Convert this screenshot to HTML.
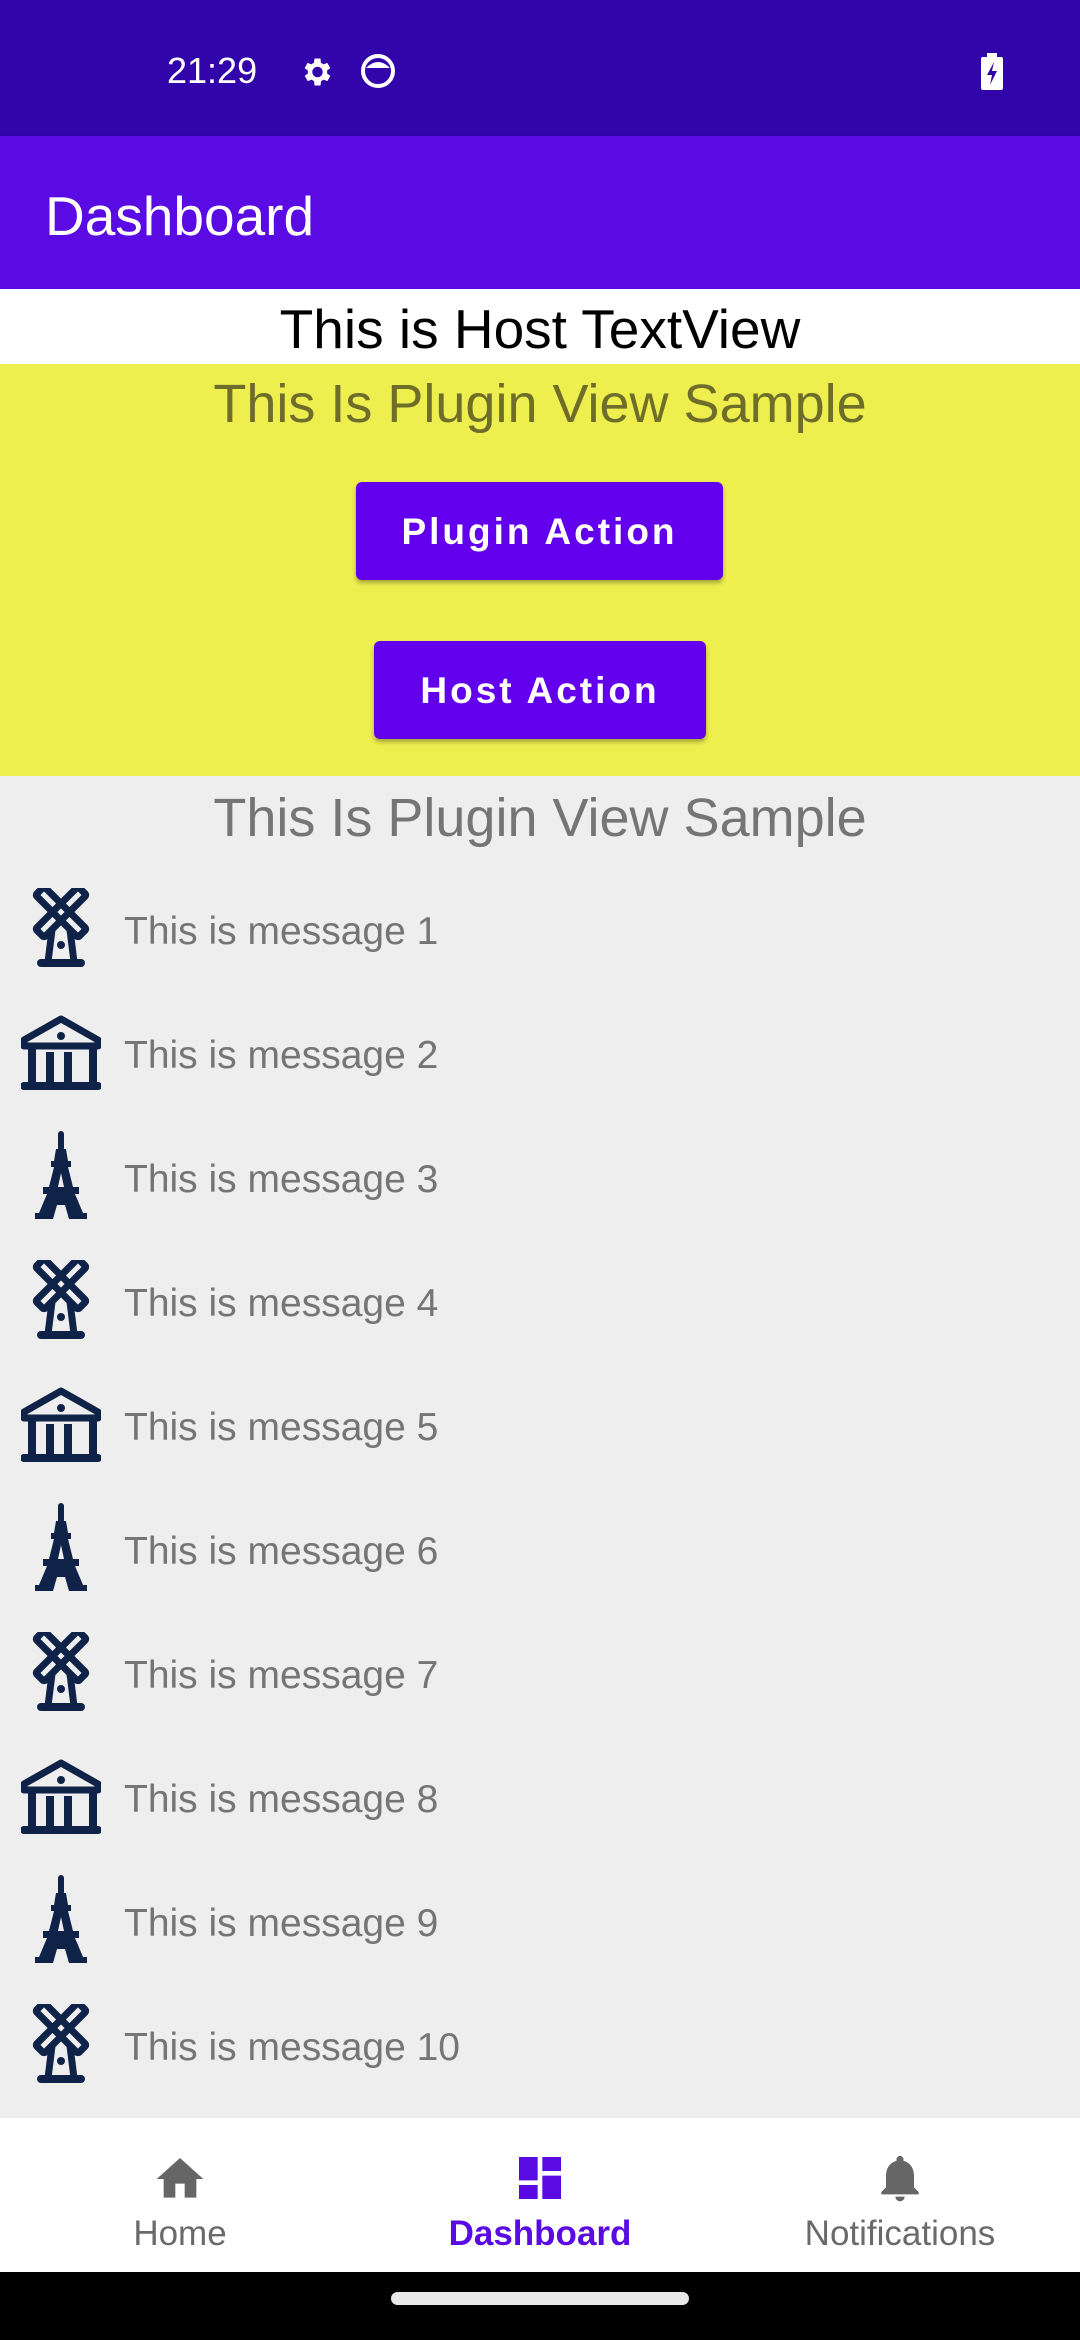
<!DOCTYPE html>
<html><head><meta charset="utf-8"><style>
*{margin:0;padding:0;box-sizing:border-box}
body{width:1080px;height:2340px;overflow:hidden;font-family:"Liberation Sans",Roboto,sans-serif;background:#eeeeee;position:relative}
.abs{position:absolute}
.status{left:0;top:0;width:1080px;height:136px;background:#3205ab}
.appbar{left:0;top:136px;width:1080px;height:153px;background:#5a0be4;box-shadow:0 3px 5px rgba(0,0,0,.2)}
.host{left:0;top:289px;width:1080px;height:75px;background:#fff;text-align:center;font-size:55px;line-height:80px;color:#000}
.yellow{left:0;top:364px;width:1080px;height:412px;background:#eeee4f}
.btn{background:#6200ee;color:#fff;font-size:37px;font-weight:bold;letter-spacing:3px;text-align:center;border-radius:6px;box-shadow:0 3px 4px rgba(0,0,0,.3)}
.title{width:1080px;text-align:center;font-size:54px}
.row{left:0;width:1080px;height:124px}
.row svg{position:absolute;left:21px;top:22px}
.row span{position:absolute;left:124px;top:4px;line-height:124px;font-size:39px;color:#757575}
.nav{left:0;top:2118px;width:1080px;height:154px;background:#fff}
.lbl{position:absolute;top:2214px;font-size:35px;text-align:center;width:360px}
</style></head><body>
<div class="abs status">
 <div class="abs" style="left:167px;top:50px;font-size:36px;color:#fff;font-weight:500">21:29</div>
 <svg class="abs" style="left:298px;top:54px" width="36" height="36" viewBox="0 0 24 24"><path fill="#fff" d="M19.4 13a7.5 7.5 0 0 0 0-2l2.1-1.6-2-3.5-2.5 1a7.3 7.3 0 0 0-1.7-1L15 3h-4l-.4 2.9a7.3 7.3 0 0 0-1.7 1l-2.5-1-2 3.5L6.6 11a7.5 7.5 0 0 0 0 2l-2.1 1.6 2 3.5 2.5-1c.5.4 1.1.7 1.7 1L11 21h4l.4-2.9c.6-.3 1.2-.6 1.7-1l2.5 1 2-3.5zM13 15.5a3.5 3.5 0 1 1 0-7 3.5 3.5 0 0 1 0 7z"/></svg>
 <svg class="abs" style="left:360px;top:53px" width="36" height="36" viewBox="0 0 36 36"><circle cx="18" cy="18" r="15" fill="none" stroke="#fff" stroke-width="4"/><path fill="#fff" d="M6 15 Q18 3 30 15 Z"/></svg>
 <svg class="abs" style="left:979px;top:53px" width="26" height="38" viewBox="0 0 26 38"><rect x="8" y="0" width="10" height="4" fill="#fff"/><rect x="2" y="4" width="22" height="33" rx="2" fill="#fff"/><path d="M15 9 L8 22 H13 L11 32 L18 18 H13 Z" fill="#3205ab"/></svg>
</div>
<div class="abs appbar"><div class="abs" style="left:45px;top:48px;font-size:55px;color:#fff;font-weight:500">Dashboard</div></div>
<div class="abs host">This is Host TextView</div>
<div class="abs yellow">
 <div class="abs title" style="top:9px;color:#6f6d2a">This Is Plugin View Sample</div>
 <div class="abs btn" style="left:356px;top:118px;width:367px;height:98px;line-height:100px">Plugin Action</div>
 <div class="abs btn" style="left:374px;top:277px;width:332px;height:98px;line-height:100px">Host Action</div>
</div>
<div class="abs title" style="left:0;top:787px;color:#757575">This Is Plugin View Sample</div>

<svg width="0" height="0" style="position:absolute">
<defs>
<g id="wm" fill="none" stroke="#0f2248" stroke-linejoin="round">
 <g stroke-width="7"><rect x="34" y="-6" width="12" height="60" rx="2" transform="rotate(45 40 24)"/><rect x="34" y="-6" width="12" height="60" rx="2" transform="rotate(-45 40 24)"/></g>
 <path d="M31 42 L27 74 M49 42 L53 74" stroke-width="7"/>
 <path d="M20 75 H60" stroke-width="8" stroke-linecap="round"/>
 <circle cx="40" cy="57" r="4" fill="#0f2248" stroke="none"/>
</g>
<g id="bk" fill="none" stroke="#0f2248">
 <path d="M3 28 L40 7 L77 28 V34 H3 Z" stroke-width="7" stroke-linejoin="round"/>
 <circle cx="40" cy="24" r="4" fill="#0f2248" stroke="none"/>
 <path d="M11 34 V72 M29 40 V72 M47 40 V72 M72 34 V72" stroke-width="8"/>
 <path d="M3 74 H77" stroke-width="8" stroke-linecap="round"/>
</g>
<g id="ef" fill="#0f2248" fill-rule="evenodd">
 <rect x="37" y="0" width="6" height="20" rx="3"/>
 <path d="M35 18 H45 L47 30 H50 V36 H47 L52 56 H58 V63 H54 L62 82 H66 V88 H48 L44 74 H36 L32 88 H14 V82 H18 L26 63 H22 V56 H28 L33 36 H30 V30 H33 Z M37 56 H43 L40 42 Z"/>
</g>
</defs></svg>

<div class="abs row" style="top:866px"><svg width="80" height="80" viewBox="0 0 80 80"><use href="#wm"/></svg><span>This is message 1</span></div>
<div class="abs row" style="top:990px"><svg width="80" height="80" viewBox="0 0 80 80"><use href="#bk"/></svg><span>This is message 2</span></div>
<div class="abs row" style="top:1114px"><svg width="80" height="90" viewBox="0 0 80 90" style="top:17px"><use href="#ef"/></svg><span>This is message 3</span></div>
<div class="abs row" style="top:1238px"><svg width="80" height="80" viewBox="0 0 80 80"><use href="#wm"/></svg><span>This is message 4</span></div>
<div class="abs row" style="top:1362px"><svg width="80" height="80" viewBox="0 0 80 80"><use href="#bk"/></svg><span>This is message 5</span></div>
<div class="abs row" style="top:1486px"><svg width="80" height="90" viewBox="0 0 80 90" style="top:17px"><use href="#ef"/></svg><span>This is message 6</span></div>
<div class="abs row" style="top:1610px"><svg width="80" height="80" viewBox="0 0 80 80"><use href="#wm"/></svg><span>This is message 7</span></div>
<div class="abs row" style="top:1734px"><svg width="80" height="80" viewBox="0 0 80 80"><use href="#bk"/></svg><span>This is message 8</span></div>
<div class="abs row" style="top:1858px"><svg width="80" height="90" viewBox="0 0 80 90" style="top:17px"><use href="#ef"/></svg><span>This is message 9</span></div>
<div class="abs row" style="top:1982px"><svg width="80" height="80" viewBox="0 0 80 80"><use href="#wm"/></svg><span>This is message 10</span></div>

<div class="abs nav">
 <svg class="abs" style="left:152px;top:33px" width="56" height="56" viewBox="0 0 24 24"><path fill="#666" d="M10 20v-6h4v6h5v-8h3L12 3 2 12h3v8z"/></svg>
 <svg class="abs" style="left:512px;top:32px" width="56" height="56" viewBox="0 0 24 24"><path fill="#5a0be4" d="M3 13h8V3H3zm0 8h8v-6H3zm10 0h8V11h-8zm0-18v6h8V3z"/></svg>
 <svg class="abs" style="left:872px;top:30px" width="56" height="60" viewBox="0 0 24 24"><path fill="#666" d="M12 22c1.1 0 2-.9 2-2h-4c0 1.1.9 2 2 2zm6-6v-5c0-3.07-1.64-5.64-4.5-6.32V4c0-.83-.67-1.5-1.5-1.5s-1.5.67-1.5 1.5v.68C7.63 5.36 6 7.92 6 11v5l-2 2v1h16v-1z"/></svg>
</div>
<div class="lbl" style="left:0;color:#6a6a6a">Home</div>
<div class="lbl" style="left:360px;color:#5a0be4;font-weight:bold">Dashboard</div>
<div class="lbl" style="left:720px;color:#6a6a6a">Notifications</div>
<div class="abs" style="left:0;top:2272px;width:1080px;height:68px;background:#000"><div class="abs" style="left:391px;top:20px;width:298px;height:13px;border-radius:7px;background:#e8e8e8"></div></div>
</body></html>
